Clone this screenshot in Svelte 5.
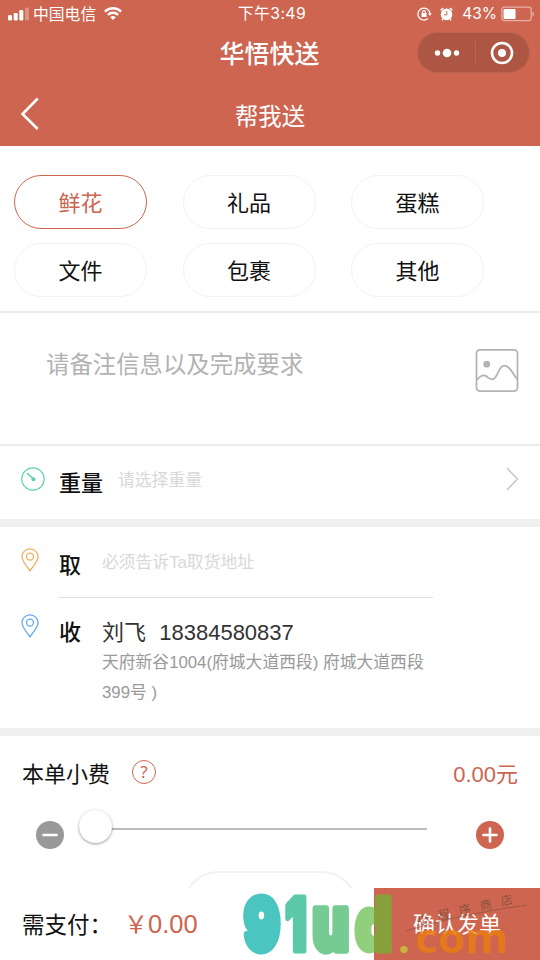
<script lang="ts">
  let kinds = ['鲜花', '礼品', '蛋糕', '文件', '包裹', '其他'];
  let selected = $state('鲜花');
  let receiver = {
    name: '刘飞',
    phone: '18384580837',
    address: '天府新谷1004(府城大道西段) 府城大道西段399号 )'
  };
  let tip = $state(0);
  let total = $derived(tip.toFixed(2));
</script>

{#snippet pin()}
  <svg class="pin" viewBox="0 0 18 24">
    <path d="M9 22.8C6 18.4 1 13.6 1 8.8a8 8 0 0 1 16 0c0 4.800-5 9.600-8 14z" />
    <circle cx="9" cy="8.600" r="3.500" />
  </svg>
{/snippet}

<div class="page">
  <header>
    <div class="status">
      <div class="carrier">
        <svg width="22" height="14" viewBox="0 0 22 14" fill="#fff">
          <rect x="0" y="8" width="4" height="5.500" rx="1.300" />
          <rect x="5.700" y="6" width="4" height="7.500" rx="1.300" />
          <rect x="11.300" y="3" width="4" height="10.500" rx="1.300" />
          <rect x="17" y="0.500" width="4" height="13" rx="1.300" opacity=".3" />
        </svg>
        <span>中国电信</span>
        <svg class="wifi" width="18" height="13" viewBox="0 0 18 13" fill="none" stroke="#fff" stroke-width="2.400">
          <path d="M.9 4.600a11.600 11.600 0 0 1 16.200 0" />
          <path d="M3.900 7.800a7.300 7.300 0 0 1 10.200 0" />
          <path d="M9 12.900L6.200 10.300a4 4 0 0 1 5.600 0z" fill="#fff" stroke="none" />
        </svg>
      </div>
      <div class="time">下午3:49</div>
      <div class="power">
        <svg width="15" height="14" viewBox="0 0 15 14" fill="none" stroke="#fff" stroke-width="1.200">
          <path d="M12.900 6.300A6 6 0 1 0 11 11.500" />
          <path d="M11 6.300h3.800L12.900 9z" fill="#fff" stroke="none" />
          <rect x="4.500" y="6" width="5" height="4" fill="#fff" stroke="none" />
          <path d="M5.500 6.500v-1.300a1.500 1.500 0 0 1 3 0v1.300" />
        </svg>
        <svg class="alarm" width="13" height="14" viewBox="0 0 13 14">
          <circle cx="6.500" cy="7.400" r="5.800" fill="#fff" />
          <path d="M.6 3.200L3.200 1M12.400 3.200L9.800 1M3 12l-1 1.400M10 12l1 1.400" stroke="#fff" stroke-width="1.500" />
          <path d="M6.800 4v3.800H4" fill="none" stroke="#cd6550" stroke-width="1" />
        </svg>
        <span>43%</span>
        <svg width="34" height="16" viewBox="0 0 34 16">
          <rect x=".8" y="1.200" width="29.400" height="13.400" rx="2.500" fill="none" stroke="#fff" stroke-opacity=".5" stroke-width="1.200" />
          <rect x="2.500" y="3" width="12" height="10" rx="1" fill="#fff" />
          <path d="M31.500 5.500c2 .8 2 4.200 0 5z" fill="#fff" opacity=".5" />
        </svg>
      </div>
    </div>
    <div class="appbar">
      <h1>华悟快送</h1>
      <div class="capsule">
        <svg width="26" height="10" viewBox="0 0 26 10" fill="#fff">
          <circle cx="3.500" cy="5" r="2.700" />
          <circle cx="13" cy="5" r="4.300" />
          <circle cx="22.500" cy="5" r="2.700" />
        </svg>
        <i></i>
        <svg width="24" height="24" viewBox="0 0 24 24">
          <circle cx="12" cy="12" r="10" fill="none" stroke="#fff" stroke-width="2.600" />
          <circle cx="12" cy="12" r="4" fill="#fff" />
        </svg>
      </div>
    </div>
    <div class="titlebar">
      <svg width="19" height="34" viewBox="0 0 19 34" fill="none" stroke="#fff" stroke-width="2.600">
        <path d="M17.700 1.500L2.500 17l15.200 15" />
      </svg>
      <h2>帮我送</h2>
    </div>
  </header>

  <div class="kinds">
    {#each kinds as kind}
      <button class:active={kind === selected} onclick={() => (selected = kind)}>{kind}</button>
    {/each}
  </div>

  <div class="note">
    <span>请备注信息以及完成要求</span>
    <svg width="44" height="43" viewBox="0 0 44 44" fill="none" stroke="#b3b3b3" stroke-width="1.800">
      <rect x="1" y="1" width="42" height="42" rx="3.500" />
      <path d="M1.500 31.500c3-3.500 6-5.800 9-4 2.500 1.500 4 4.300 7.500 3.300C23 29.300 23.500 17 29.500 17c5.500 0 9 8.500 13 14" />
      <circle cx="11.500" cy="15.500" r="3.500" fill="#b3b3b3" stroke="none" />
    </svg>
  </div>

  <div class="weight">
    <svg width="24" height="24" viewBox="0 0 24 24" fill="none" stroke="#5fd0ae">
      <circle cx="12" cy="12" r="11.200" stroke-width="1.200" />
      <path d="M6.500 6.500l6 5.500" stroke-width="1.600" stroke-linecap="round" />
      <circle cx="12.500" cy="12.300" r="2" fill="#5fd0ae" stroke="none" />
    </svg>
    <b>重量</b>
    <span>请选择重量</span>
    <svg class="more" width="13" height="24" viewBox="0 0 13 24" fill="none" stroke="#c8c8c8" stroke-width="1.600">
      <path d="M1 1l10.500 11L1 23" />
    </svg>
  </div>

  <div class="route">
    <div class="from">
      {@render pin()}
      <b>取</b>
      <span>必须告诉Ta取货地址</span>
    </div>
    <div class="to">
      {@render pin()}
      <b>收</b>
      <div class="receiver">
        <div class="name">{receiver.name}&nbsp; {receiver.phone}</div>
        <div class="address">{receiver.address}</div>
      </div>
    </div>
  </div>

  <div class="tip">
    <div class="tiphead">
      <span>本单小费</span>
      <i class="help">?</i>
      <em>{total}元</em>
    </div>
    <div class="slider">
      <button class="minus" aria-label="减" onclick={() => (tip = Math.max(0, tip - 1))}>
        <svg viewBox="0 0 28 28"><path d="M7.500 14h13" /></svg>
      </button>
      <div class="track"><div class="knob" style={`margin-left:${Math.min(90, tip)}%`}></div></div>
      <button class="plus" aria-label="加" onclick={() => (tip += 1)}>
        <svg viewBox="0 0 28 28"><path d="M7.500 14h13M14 7.500v13" /></svg>
      </button>
    </div>
    <div class="sheet"></div>
  </div>

  <footer>
    <div class="pay">需支付：<em><small>￥</small>0.00</em></div>
    <button class="submit">确认发单</button>
    <svg class="mark" viewBox="0 0 310 80">
      <defs>
        <!-- the d runs over the edge of the button, where it darkens -->
        <linearGradient id="leaf" gradientUnits="userSpaceOnUse" x1="0" y1="0" x2="50" y2="0">
          <stop offset=".474" stop-color="#90cf7c" />
          <stop offset=".474" stop-color="#88a03c" />
        </linearGradient>
      </defs>
      <g class="big">
        <text transform="translate(14 70) scale(.74 1)" fill="#4bc5bf" stroke="#4bc5bf">9</text>
        <text transform="translate(55.500 70) scale(.64 1)" fill="#5bc9a8" stroke="#5bc9a8">1</text>
        <text transform="translate(82.500 70) scale(.78 1.040)" fill="#76cb92" stroke="#76cb92">u</text>
        <text transform="translate(125.500 70) scale(.78 1)" fill="url(#leaf)" stroke="url(#leaf)">d</text>
      </g>
      <text class="dot" x="168" y="73">.</text>
      <text class="com" x="185" y="73" textLength="93" lengthAdjust="spacingAndGlyphs">com</text>
      <path d="M176 51Q225 35 297 25" fill="none" stroke="#6d4b3c" stroke-width=".7" opacity=".7" />
      <text class="shop" transform="translate(188 45) rotate(-13)">小程序商店</text>
    </svg>
  </footer>
</div>

<style>
  :global(body) {
    background: #fff;
    overflow: hidden;
  }
  .page {
    width: 540px;
    height: 960px;
    display: flex;
    flex-direction: column;
    overflow: hidden;
    font-family: "Liberation Sans", "Noto Sans CJK SC", sans-serif;
    color: #111;
  }
  svg {
    display: block;
    flex: none;
  }
  b, em, i, h1, h2 {
    font-style: normal;
    font-weight: 400;
    margin: 0;
  }
  button {
    font: inherit;
    border: 0;
    padding: 0;
    color: inherit;
    background: none;
  }

  header {
    height: 146px;
    flex: none;
    background: #cd6550;
    color: #fff;
  }
  .status {
    height: 27px;
    display: grid;
    grid-template-columns: 1fr auto 1fr;
    align-items: center;
    padding: 0 5px 0 8px;
    font-size: 15.800px;
  }
  .carrier, .power {
    display: flex;
    align-items: center;
  }
  .carrier span {
    margin: 0 8px 1px 3px;
  }
  .time {
    font-family: Inter, "Noto Sans CJK SC", sans-serif;
    letter-spacing: .4px;
    padding: 0 0 2px 1px;
  }
  .power {
    justify-content: flex-end;
  }
  .alarm {
    margin: 0 9px 0 8px;
  }
  .power span {
    font-family: Inter, sans-serif;
    font-size: 15.500px;
    margin-right: 4px;
  }

  .appbar {
    height: 51px;
    display: grid;
    grid-template-columns: 1fr auto 1fr;
    align-items: center;
    padding-right: 10px;
  }
  .appbar h1 {
    grid-column: 2;
    font-size: 25px;
    font-weight: 500;
    margin: 0 0 1px 9px;
  }
  .capsule {
    justify-self: end;
    width: 113px;
    height: 41px;
    box-sizing: border-box;
    border: 1px solid #bd6553;
    border-radius: 21px;
    background: #ae5644;
    display: flex;
    align-items: center;
    justify-content: space-between;
    padding: 0 15px 0 16px;
  }
  .capsule i {
    width: 1px;
    height: 24px;
    background: #bd6553;
  }
  .titlebar {
    height: 68px;
    display: grid;
    grid-template-columns: 1fr auto 1fr;
    align-items: center;
    padding: 3px 0 0 20px;
    box-sizing: border-box;
  }
  .titlebar h2 {
    font-size: 23.400px;
    margin: 2px 20px 0 0;
  }

  .kinds {
    height: 167px;
    flex: none;
    box-sizing: border-box;
    padding: 29px 14px;
    display: grid;
    grid-template-columns: repeat(3, 133px);
    grid-auto-rows: 54px;
    gap: 14px 35.500px;
    border-bottom: 2px solid #ececec;
  }
  .kinds button {
    border: 1.500px solid #f2f2f2;
    border-radius: 27px;
    padding-bottom: 3px;
    font-size: 22px;
  }
  .kinds .active {
    color: #cd6550;
    border-color: #cd6550;
  }

  .note {
    height: 133px;
    flex: none;
    box-sizing: border-box;
    border-bottom: 2px solid #ececec;
    display: flex;
    justify-content: space-between;
    align-items: flex-start;
    padding: 36px 21px 0 46px;
    font-size: 23.400px;
    line-height: 32px;
    color: #b2b2b2;
  }

  .weight {
    height: 81px;
    flex: none;
    box-sizing: border-box;
    border-bottom: 8px solid #f0f0f0;
    display: flex;
    align-items: center;
    padding: 0 21px 7px;
  }
  .weight b {
    font-size: 22px;
    font-weight: 500;
    margin: 4px 15px 0 14px;
  }
  .weight span, .from span {
    font-size: 16.800px;
    color: #d8d8d8;
  }
  .more {
    margin-left: auto;
  }

  .route {
    height: 209px;
    flex: none;
    box-sizing: border-box;
    border-bottom: 8px solid #f0f0f0;
    padding-left: 21px;
  }
  .from, .to {
    display: flex;
    align-items: flex-start;
  }
  .from {
    height: 71px;
    position: relative;
    color: #111;
  }
  .from::after {
    content: '';
    position: absolute;
    left: 38px;
    width: 374px;
    bottom: 0;
    height: 1px;
    background: #dedede;
  }
  .pin {
    width: 18px;
    height: 24px;
    margin: 21px 20px 0 0;
    fill: none;
    stroke: #f2ad5f;
    stroke-width: 1.300;
  }
  .to .pin {
    stroke: #62a9f6;
    margin-top: 16px;
  }
  .route b {
    width: 43px;
    font-size: 22px;
    font-weight: 500;
    line-height: 32px;
    margin-top: 23px;
  }
  .from span {
    line-height: 26px;
    margin-top: 23px;
  }
  .to b {
    margin-top: 19px;
  }
  .receiver {
    width: 330px;
    padding-top: 19px;
  }
  .name {
    font-size: 22px;
    line-height: 32px;
    color: #333;
    white-space: nowrap;
    word-spacing: .5px;
  }
  .address {
    font-size: 16.800px;
    line-height: 30px;
    color: #999;
    word-break: break-all;
    margin-top: -1px;
  }

  .tip {
    height: 152px;
    flex: none;
    overflow: hidden;
  }
  .tiphead {
    height: 72px;
    display: flex;
    align-items: center;
    padding: 0 22px;
    font-size: 22px;
  }
  .tiphead span, .tiphead em {
    margin-bottom: 1px;
  }
  .help {
    width: 22px;
    height: 22px;
    line-height: 22px;
    margin-left: 22px;
    border: 1px solid #cd6550;
    border-radius: 50%;
    text-align: center;
    font-family: "Noto Sans", sans-serif;
    font-size: 17px;
    color: #cd6550;
  }
  em {
    color: #cd6550;
  }
  .tiphead em {
    margin-left: auto;
  }
  .slider {
    height: 42px;
    display: flex;
    align-items: center;
    padding: 0 36px;
    box-sizing: border-box;
  }
  .slider button {
    width: 28px;
    height: 28px;
    border-radius: 50%;
    margin-top: 11px;
  }
  .slider path {
    fill: none;
    stroke: #fff;
    stroke-width: 2.600;
    stroke-linecap: round;
  }
  .minus {
    background: #999;
  }
  .plus {
    background: #cd6550;
    margin-left: auto;
  }
  .track {
    width: 348px;
    height: 2px;
    margin-left: 15px;
    background: #bbb;
    display: flex;
    align-items: center;
  }
  .knob {
    width: 33px;
    height: 33px;
    flex: none;
    border-radius: 50%;
    background: #fff;
    box-shadow: 0 1px 3px rgba(0, 0, 0, .4);
    position: relative;
    top: -3px;
  }
  .sheet {
    width: 174px;
    height: 70px;
    margin: 21px 0 0 183px;
    box-sizing: border-box;
    border: 2px solid #f2f2f2;
    border-radius: 35px;
  }

  footer {
    height: 72px;
    flex: none;
    display: flex;
    position: relative;
    background: #fff;
  }
  .pay {
    flex: 1;
    padding-left: 22px;
    font-size: 22.500px;
    line-height: 75px;
    display: flex;
  }
  .pay em {
    font-size: 25.500px;
    line-height: 72px;
    margin-left: 12px;
  }
  .pay small {
    font-size: 24px;
  }
  .submit {
    width: 166px;
    padding-bottom: 4px;
    background: #cd6550;
    color: #fff;
    font-size: 22px;
  }
  .mark {
    position: absolute;
    left: 230px;
    top: -8px;
    width: 310px;
    height: 80px;
    pointer-events: none;
  }
  .big {
    font-family: Inter, sans-serif;
    font-weight: 900;
    font-size: 72px;
    stroke-width: 7px;
    stroke-linejoin: round;
  }
  .dot, .com {
    font-family: "Noto Sans", sans-serif;
    font-weight: 700;
    font-size: 42px;
    fill: #e87c14;
    opacity: .85;
  }
  .dot {
    fill: #c9b43a;
    opacity: 1;
  }
  .shop {
    font-family: "Noto Sans CJK SC", sans-serif;
    font-weight: 300;
    font-size: 12px;
    letter-spacing: 9.500px;
    fill: #6d4b3c;
  }
</style>
